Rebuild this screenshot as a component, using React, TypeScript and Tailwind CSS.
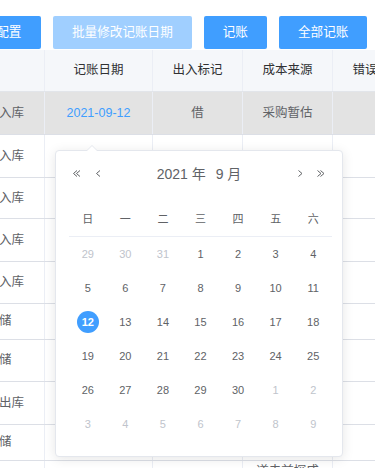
import React from "react";

const FONT = { fontFamily: '"Liberation Sans", "Noto Sans CJK SC", sans-serif' };

type Row = { h: number; c0: string; c1?: string; c2?: string; c3?: string; active?: boolean };

const rows: Row[] = [
  { h: 43, c0: "采购入库", c1: "2021-09-12", c2: "借", c3: "采购暂估", active: true },
  { h: 43, c0: "采购入库" },
  { h: 41, c0: "采购入库" },
  { h: 43, c0: "采购入库" },
  { h: 42, c0: "采购入库" },
  { h: 36, c0: "仓储" },
  { h: 42, c0: "仓储" },
  { h: 43, c0: "销售出库" },
  { h: 36, c0: "仓储" },
];

const weeks: [number, boolean][][] = [
  [[29, false], [30, false], [31, false], [1, true], [2, true], [3, true], [4, true]],
  [[5, true], [6, true], [7, true], [8, true], [9, true], [10, true], [11, true]],
  [[12, true], [13, true], [14, true], [15, true], [16, true], [17, true], [18, true]],
  [[19, true], [20, true], [21, true], [22, true], [23, true], [24, true], [25, true]],
  [[26, true], [27, true], [28, true], [29, true], [30, true], [1, false], [2, false]],
  [[3, false], [4, false], [5, false], [6, false], [7, false], [8, false], [9, false]],
];

function Chev({ dir, double }: { dir: "l" | "r"; double?: boolean }) {
  const single = (x: number) =>
    dir === "l"
      ? `${x + 4},0.5 ${x + 0.5},3.5 ${x + 4},6.5`
      : `${x + 0.5},0.5 ${x + 4},3.5 ${x + 0.5},6.5`;
  return (
    <svg width={double ? 8 : 5} height={7} viewBox={double ? "0 0 8 7" : "0 0 5 7"} fill="none">
      <polyline points={single(0)} stroke="#606266" strokeWidth={1} />
      {double && <polyline points={single(3)} stroke="#606266" strokeWidth={1} />}
    </svg>
  );
}

export default function App() {
  const cellBase = "flex items-center justify-center border-r border-[#ebeef5] shrink-0";
  return (
    <div className="relative w-[375px] h-[468px] overflow-hidden bg-white" style={FONT}>
      {/* buttons */}
      <div className="flex gap-3 mt-[16px] ml-[-47px] h-[33px] text-[12.6px] text-white whitespace-nowrap">
        <div className="flex items-center w-[88px] pl-[18px] bg-[#409eff] rounded-[2px] shrink-0">字段配置</div>
        <div className="flex items-center px-[19px] bg-[#a0cfff] rounded-[2px] shrink-0">批量修改记账日期</div>
        <div className="flex items-center px-[19px] bg-[#409eff] rounded-[2px] shrink-0">记账</div>
        <div className="flex items-center px-[19px] bg-[#409eff] rounded-[2px] shrink-0">全部记账</div>
      </div>

      {/* table */}
      <div className="mt-[1px] ml-[-46px] text-[12.5px] whitespace-nowrap">
        <div className="flex h-[42px] bg-[#f5f7fa] border-b border-[#e2e5ea] text-[#303133]">
          <div className={`${cellBase} w-[91px]`}></div>
          <div className={`${cellBase} w-[108px]`}>记账日期</div>
          <div className={`${cellBase} w-[90px]`}>出入标记</div>
          <div className={`${cellBase} w-[90px]`}>成本来源</div>
          <div className={`${cellBase} w-[90px]`}>错误信息</div>
        </div>
        {rows.map((r, i) => (
          <div
            key={i}
            className={`flex border-b border-[#dcdfe6] text-[#606266] ${r.active ? "bg-[#e3e3e3]" : "bg-white"}`}
            style={{ height: r.h }}
          >
            <div className={`${cellBase} w-[91px]`}>{r.c0}</div>
            <div className={`${cellBase} w-[108px] text-[#409eff]`}>{r.c1}</div>
            <div className={`${cellBase} w-[90px]`}>{r.c2}</div>
            <div className={`${cellBase} w-[90px]`}>{r.c3}</div>
            <div className={`${cellBase} w-[90px]`}></div>
          </div>
        ))}
        <div className="flex h-[42px] text-[#606266]">
          <div className="border-r border-[#ebeef5] w-[91px] shrink-0"></div>
          <div className="border-r border-[#ebeef5] w-[108px] shrink-0"></div>
          <div className="border-r border-[#ebeef5] w-[90px] shrink-0"></div>
          <div className="flex justify-center pt-[2px] leading-[16px] border-r border-[#ebeef5] w-[90px] shrink-0">道未前探成</div>
          <div className="border-r border-[#ebeef5] w-[90px] shrink-0"></div>
        </div>
      </div>

      {/* date picker popup */}
      <div className="absolute left-[55px] top-[150px] w-[288px] h-[307px] bg-white border border-[#e4e7ed] rounded-[4px] shadow-[0_2px_12px_0_rgba(0,0,0,0.1)] text-[#606266]">
        {/* arrow */}
        <div className="absolute left-[30px] top-[-6px] w-0 h-0 border-l-[6px] border-r-[6px] border-b-[6px] border-l-transparent border-r-transparent border-b-[#e4e7ed]"></div>
        <div className="absolute left-[31px] top-[-5px] w-0 h-0 border-l-[5px] border-r-[5px] border-b-[5px] border-l-transparent border-r-transparent border-b-white"></div>

        <div className="relative mt-[11px] h-[24px] flex items-center justify-center text-[14px]">
          <div className="absolute left-[17px] top-[8px]"><Chev dir="l" double /></div>
          <div className="absolute left-[40px] top-[8px]"><Chev dir="l" /></div>
          <span className="px-[5px]">2021 年</span>
          <span className="px-[5px]">9 月</span>
          <div className="absolute left-[242px] top-[8px]"><Chev dir="r" /></div>
          <div className="absolute left-[261px] top-[8px]"><Chev dir="r" double /></div>
        </div>

        <div className="ml-[13px] mt-[16px] w-[263px] text-[11px]">
          <div className="grid grid-cols-7 h-[35px] border-b border-[#ebeef5]">
            {["日", "一", "二", "三", "四", "五", "六"].map((d) => (
              <div key={d} className="flex items-center justify-center">{d}</div>
            ))}
          </div>
          {weeks.map((w, wi) => (
            <div key={wi} className="grid grid-cols-7 h-[34px]">
              {w.map(([n, cur], di) => {
                const sel = cur && n === 12;
                return (
                  <div key={di} className="flex items-center justify-center">
                    {sel ? (
                      <span className="flex items-center justify-center w-[22px] h-[22px] rounded-full bg-[#409eff] text-white font-bold">
                        {n}
                      </span>
                    ) : (
                      <span className={cur ? "text-[#606266]" : "text-[#c0c4cc]"}>{n}</span>
                    )}
                  </div>
                );
              })}
            </div>
          ))}
        </div>
      </div>
    </div>
  );
}
